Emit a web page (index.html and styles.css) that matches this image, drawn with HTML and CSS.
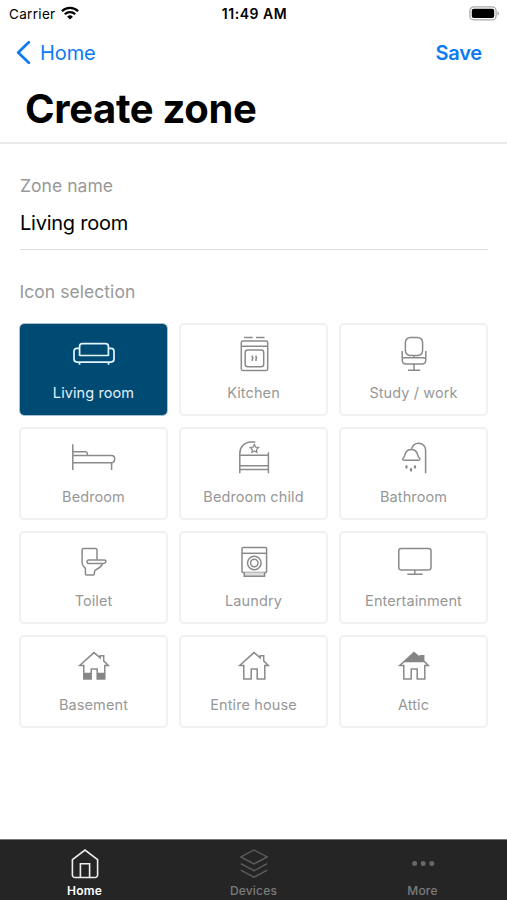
FILE: index.html
```html
<!DOCTYPE html>
<html lang="en">
<head>
<meta charset="utf-8">
<title>Create zone</title>
<link rel="stylesheet" href="styles.css">
</head>
<body>
<div class="screen">
  <header class="header">
    <div class="status">
      <div class="carrier">
        <span>Carrier</span>
        <svg class="wifi" width="18" height="14" viewBox="0 0 18 14" fill="none" stroke="#000" stroke-width="2.3"><path d="M.9 5.2a11.5 11.5 0 0 1 16.2 0M3.8 8.2a7.4 7.4 0 0 1 10.4 0"/><path d="M9 13.6 6.1 10.7a4.1 4.1 0 0 1 5.8 0Z" fill="#000" stroke="none"/></svg>
      </div>
      <span class="time">11:49 AM</span>
      <svg class="battery" width="32" height="15" viewBox="0 0 32 15"><rect x="1.9" y=".9" width="26.2" height="13" rx="4" fill="#fff" stroke="#aaa" stroke-width="1.3"/><rect x="3.8" y="2.7" width="22.4" height="9.4" rx="2" fill="#000"/><path d="M29.5 5.2c2 .7 2 3.7 0 4.4Z" fill="#aaa"/></svg>
    </div>
    <nav class="nav">
      <a class="back"><svg width="15" height="24" viewBox="0 0 15 24" fill="none" stroke="#0b7bf5" stroke-width="2.7" stroke-linecap="round" stroke-linejoin="round"><path d="M12.8 1.3 2.2 11.5l10.6 10.2"/></svg><span>Home</span></a>
      <a class="save">Save</a>
    </nav>
    <h1>Create zone</h1>
  </header>
  <main class="content">
    <div class="field">
      <div class="label">Zone name</div>
      <div class="value">Living room</div>
    </div>
    <div class="label selection">Icon selection</div>
    <div class="grid">
      <div class="tile active">
        <svg class="icon" viewBox="0 0 48 40"><path d="M9.6 24V14.5a2.8 2.8 0 0 1 2.8-2.8h23.2a2.8 2.8 0 0 1 2.8 2.8V24M9.6 23.5h28.8M9.6 16.3H7a3 3 0 0 0-3 3v7.8a3 3 0 0 0 3 3h34a3 3 0 0 0 3-3v-7.8a3 3 0 0 0-3-3h-2.6M9.5 30v2.8M38.5 30v2.8"/></svg>
        <span>Living room</span>
      </div>
      <div class="tile">
        <svg class="icon" viewBox="0 0 48 40"><path d="M14.2 5.6h8.5M26 5.6h8.5M11.3 14.3h26.4"/><rect x="11.3" y="9" width="26.4" height="29.5" rx="1.4"/><rect x="15.2" y="18" width="18.5" height="16.8" rx="2.5"/><path d="M22.3 23.5v1.6q1 1 0 2v1.8M26 23.5v1.6q1 1 0 2v1.8"/></svg>
        <span>Kitchen</span>
      </div>
      <div class="tile">
        <svg class="icon" viewBox="0 0 48 40"><rect x="15.4" y="5.4" width="17.2" height="18.2" rx="5"/><path d="M24 23.6v2.2M12.2 19v7.6M35.8 19v7.6M24 32v6M18 38.3h12.2"/><path d="M14.5 25.8h19a2 2 0 0 1 2.3 2c0 2.5-1.5 4.3-4 4.3H16.2c-2.5 0-4-1.8-4-4.3a2 2 0 0 1 2.3-2Z"/></svg>
        <span>Study / work</span>
      </div>
      <div class="tile">
        <svg class="icon" viewBox="0 0 48 40"><path d="M2.8 8.3V34M2.8 15.7h12.4a2.2 2.2 0 0 1 2.2 2.2v1.5M2.8 19.6h38.8a3 3 0 0 1 3 3v1.2a3 3 0 0 1-3 3H2.8M41.6 26.8V34"/></svg>
        <span>Bedroom</span>
      </div>
      <div class="tile">
        <svg class="icon" viewBox="0 0 48 40"><path d="M9.8 37.3V17.5C9.8 11 14.5 6 21 6h4.3M38.4 16.3v21M9.8 19.2h28.6M9.8 29.7h28.6M9.8 33.4h28.6"/><path d="m24.4 8.4 1.3 2.7 2.9.4-2.1 2 .5 2.9-2.6-1.4-2.6 1.4.5-2.9-2.1-2 2.9-.4Z" stroke-width="1.2"/></svg>
        <span>Bedroom child</span>
      </div>
      <div class="tile">
        <svg class="icon" viewBox="0 0 48 40"><path d="M35.6 37.3V14a6.8 6.8 0 0 0-6.8-6.8c-4 0-6.6 2.6-7.4 6.2M14.2 24.2h14.2c1.8 0 2-1.4.9-2.2-1.2-.9-1.3-2-1.8-3.7-.8-2.8-3-4.8-6.2-4.8s-5.4 2-6.2 4.8c-.5 1.7-.6 2.8-1.8 3.7-1.1.8-.9 2.2.9 2.2Z"/><path d="M16.5 30.3v1.3M21 33.2v1.3M25 30.3v1.3" stroke-width="2.3" stroke-linecap="round"/></svg>
        <span>Bathroom</span>
      </div>
      <div class="tile">
        <svg class="icon" viewBox="0 0 48 40"><path d="M27 19.7V10a1.6 1.6 0 0 0-1.6-1.6H13.7A1.6 1.6 0 0 0 12.1 10v12.4c0 2.2.8 3.4 2 4.4.9.7 1.3 1.2 1.3 2.2v4.8c0 .9.4 1.2 1.2 1.2h6.6c.8 0 1.2-.4 1.2-1.2v-1.5c0-1.7.6-2.3 2.4-3.1 3-1.3 4.8-3.3 5.7-5.8"/><path d="M18.8 19.9H34c1 0 2 .2 2 1.2 0 1.5-1.3 2.3-2.6 2.3H18.8a1.7 1.7 0 0 1 0-3.5Z"/></svg>
        <span>Toilet</span>
      </div>
      <div class="tile">
        <svg class="icon" viewBox="0 0 48 40"><rect x="12" y="7.4" width="24.6" height="25" rx="1"/><path d="M12 13.3h24.6"/><path d="M14.2 32.4v3.8h20.4v-3.8" fill="#ddd"/><circle cx="24.3" cy="23" r="6.8"/><circle cx="24.3" cy="23" r="3.7"/></svg>
        <span>Laundry</span>
      </div>
      <div class="tile">
        <svg class="icon" viewBox="0 0 48 40"><rect x="8.8" y="8.4" width="32.2" height="21.5" rx="2.3"/><path d="M24.8 30v4.2M17.3 34.3h15.4"/></svg>
        <span>Entertainment</span>
      </div>
      <div class="tile">
        <svg class="icon" viewBox="0 0 48 40"><path d="M13.8 35V21.5H9.7L24 8.6l6.2 5.3v-2.2h3.5v5.2l4.6 4.6h-3.5V35h-7.6V24.9h-6V35Z"/><path class="solid" d="M13.8 28.7h7.4V35h-7.4ZM27.2 28.7h7.6V35h-7.6Z"/></svg>
        <span>Basement</span>
      </div>
      <div class="tile">
        <svg class="icon" viewBox="0 0 48 40"><path d="M13.8 35V21.5H9.7L24 8.6l6.2 5.3v-2.2h3.5v5.2l4.6 4.6h-3.5V35h-7.6V24.9h-6V35Z"/></svg>
        <span>Entire house</span>
      </div>
      <div class="tile">
        <svg class="icon" viewBox="0 0 48 40"><path d="M13.8 35V21.5H9.7L24 8.6l6.2 5.3v-2.2h3.5v5.2l4.6 4.6h-3.5V35h-7.6V24.9h-6V35Z"/><path class="solid" d="M13.4 18.2 24 8.6l6.2 5.3v-2.2h3.5v6.5Z"/></svg>
        <span>Attic</span>
      </div>
    </div>
  </main>
  <footer class="tabs">
    <div class="tab current">
      <svg width="30" height="32" viewBox="0 0 30 32"><path d="M2.4 11.7 15 2.1l12.6 9.6v15.2a2.6 2.6 0 0 1-2.6 2.6H5a2.6 2.6 0 0 1-2.6-2.6ZM10.4 29.5V15.7h9.2v13.8"/></svg>
      <span>Home</span>
    </div>
    <div class="tab">
      <svg width="30" height="32" viewBox="0 0 30 32"><path d="M15 2 28.2 8.9 15 15.9 1.8 8.9ZM1.8 15.7 15 22.7l13.2-7M1.8 22.1 15 29.1l13.2-7"/></svg>
      <span>Devices</span>
    </div>
    <div class="tab">
      <svg width="30" height="32" viewBox="0 0 30 32"><g class="dots"><circle cx="6.6" cy="15.5" r="2.5"/><circle cx="15.2" cy="15.5" r="2.5"/><circle cx="23.8" cy="15.5" r="2.5"/></g></svg>
      <span>More</span>
    </div>
  </footer>
</div>
</body>
</html>
```
FILE: styles.css
```css
* { box-sizing: border-box; }
body { margin: 0; background: #fff; color: #000; font-family: Inter, "Liberation Sans", sans-serif; }
svg { display: block; flex: none; }
.screen { width: 507px; height: 900px; display: flex; flex-direction: column; overflow: hidden; }
.header { height: 144px; border-bottom: 2px solid #ebebeb; }
.status { height: 28px; display: grid; grid-template-columns: 1fr auto 1fr; align-items: center; padding: 0 7px 0 9px; font-size: 13.5px; line-height: 28px; }
.carrier { display: flex; align-items: center; gap: 5.5px; letter-spacing: .32px; }
.wifi { margin-top: -2px; }
.time { font-size: 14px; font-weight: 600; letter-spacing: .55px; }
.battery { justify-self: end; margin-top: -2px; }
.nav { height: 48px; display: flex; align-items: center; justify-content: space-between; padding: 1px 25px 0 16px; color: #0b7bf5; font-size: 20px; }
.back { display: flex; align-items: center; gap: 9px; letter-spacing: -.1px; }
.save { font-weight: 600; letter-spacing: -.2px; }
h1 { margin: 8px 0 0 25px; font-size: 40px; line-height: 50px; font-weight: 700; letter-spacing: -.35px; white-space: nowrap; }
.content { flex: 1; padding: 30px 19px 0 19px; }
.field { height: 76px; margin-left: 1px; border-bottom: 1px solid #dedede; }
.label { font-size: 17.5px; line-height: 24px; color: #999; letter-spacing: .05px; }
.value { margin-top: 13px; font-size: 20px; line-height: 24px; letter-spacing: -.25px; }
.selection { margin: 30px 0 0 .5px; }
.grid { display: grid; grid-template-columns: repeat(3, 1fr); grid-auto-rows: 93px; gap: 11px; margin-top: 19px; }
.tile { display: flex; flex-direction: column; align-items: center; padding-top: 7px; border: 2px solid #f1f1f1; border-radius: 5px; color: #979797; font-size: 14.5px; line-height: 20px; letter-spacing: .1px; }
.tile span { margin-top: 11px; }
.active { background: #004b73; background-clip: padding-box; border: 1px solid #a9c2cf; padding-top: 8px; color: #e3f1f8; }
.icon { width: 48px; height: 40px; fill: none; stroke: #8a8a8a; stroke-width: 1.5; }
.active .icon { stroke: #e3f5ff; stroke-width: 1.7; }
.solid { fill: #858587; stroke: none; }
.tabs { height: 61px; display: grid; grid-template-columns: repeat(3, 1fr); background: #252525; border-top: 1px solid #777; }
.tab { display: flex; flex-direction: column; align-items: center; padding-top: 8px; color: #7c7c7c; font-size: 12px; line-height: 16px; font-weight: 500; letter-spacing: .2px; }
.tab svg { fill: none; stroke: #5d5d5d; stroke-width: 1.4; }
.tab span { margin-top: 3px; }
.current { color: #fff; font-weight: 600; }
.current svg { stroke: #eee; stroke-width: 1.6; }
.tab .dots { fill: #686868; stroke: none; }
```
